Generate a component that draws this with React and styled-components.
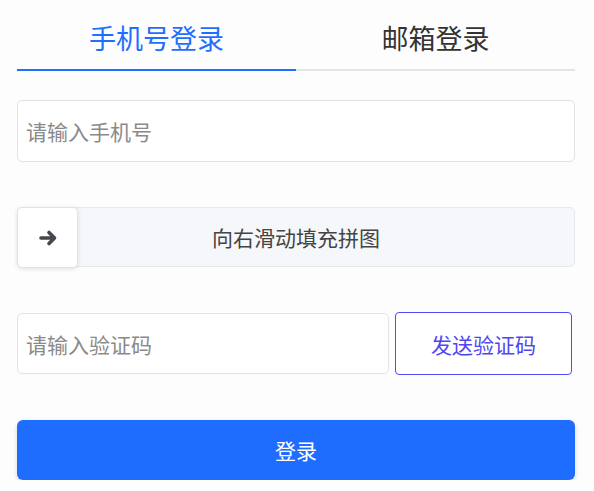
import React, { useState } from 'react'
import styled, { createGlobalStyle } from 'styled-components'

const GlobalStyle = createGlobalStyle`
    body {
        margin: 0;
        background: #fdfdfd;
        font-family: "Noto Sans CJK SC", "Noto Sans", sans-serif;
    }
`

const Wrapper = styled.div`
    width: 558px;
    padding: 0 19px 0 17px;
`

const Tabs = styled.div`
    display: flex;
    margin-bottom: 29px;
`

const Tab = styled.div`
    flex: 1;
    height: 71px;
    display: flex;
    align-items: center;
    justify-content: center;
    padding-top: 6px;
    box-sizing: border-box;
    font-size: 27px;
    color: ${p => (p.active ? '#1f6fff' : '#333')};
    border-bottom: 2px solid ${p => (p.active ? '#1f6fff' : '#e4e4e4')};
    cursor: pointer;
`

const Form = styled.div`
    display: flex;
    flex-direction: column;
    gap: 45px;
`

const Input = styled.input`
    box-sizing: border-box;
    width: 100%;
    height: 62px;
    padding: 0 8px;
    border: 1px solid #e3e3e3;
    border-radius: 5px;
    background: #fff;
    font-family: inherit;
    font-size: 21px;
    color: #333;
    outline: none;

    &::placeholder {
        color: #8a8a8a;
    }
`

const Slider = styled.div`
    position: relative;
    height: 60px;
    box-sizing: border-box;
    border: 1px solid #e6e8eb;
    border-radius: 5px;
    background: #f5f7fa;
    display: flex;
    align-items: center;
    justify-content: center;
    font-size: 21px;
    color: #444;
`

const Handle = styled.div`
    position: absolute;
    left: -1px;
    top: -1px;
    width: 61px;
    height: 61px;
    box-sizing: border-box;
    background: #fff;
    border: 1px solid #e3e3e3;
    border-radius: 5px;
    box-shadow: 0 1px 4px rgba(0, 0, 0, 0.12);
    display: flex;
    align-items: center;
    justify-content: center;
    color: #45474d;
`

const CodeRow = styled.div`
    display: flex;
    align-items: center;
    gap: 6px;

    ${Input} {
        flex: 1;
        height: 61px;
    }
`

const SendButton = styled.button`
    width: 177px;
    height: 63px;
    margin-right: 3px;
    box-sizing: border-box;
    border: 1px solid #4d4df5;
    border-radius: 4px;
    background: #fff;
    font-family: inherit;
    font-size: 21px;
    color: #5046f0;
    cursor: pointer;
`

const LoginButton = styled.button`
    height: 60px;
    border: none;
    border-radius: 6px;
    background: #1f6dff;
    color: #fff;
    font-family: inherit;
    font-size: 21px;
    box-shadow: 0 2px 5px rgba(0, 0, 0, 0.15);
    cursor: pointer;
`

const Arrow = () => (
    <svg width="20" height="20" viewBox="0 0 20 20" fill="none" stroke="currentColor"
        strokeWidth="3.6" strokeLinecap="round" strokeLinejoin="round">
        <path d="M3 10h13M11 4.5l5.5 5.5-5.5 5.5" />
    </svg>
)

export default function App() {
    const [tab, setTab] = useState('phone')

    return (
        <>
            <GlobalStyle />
            <Wrapper>
                <Tabs>
                    <Tab active={tab === 'phone'} onClick={() => setTab('phone')}>手机号登录</Tab>
                    <Tab active={tab === 'email'} onClick={() => setTab('email')}>邮箱登录</Tab>
                </Tabs>
                <Form>
                    <Input placeholder="请输入手机号" />
                    <Slider>
                        <Handle><Arrow /></Handle>
                        向右滑动填充拼图
                    </Slider>
                    <CodeRow>
                        <Input placeholder="请输入验证码" />
                        <SendButton>发送验证码</SendButton>
                    </CodeRow>
                    <LoginButton>登录</LoginButton>
                </Form>
            </Wrapper>
        </>
    )
}
